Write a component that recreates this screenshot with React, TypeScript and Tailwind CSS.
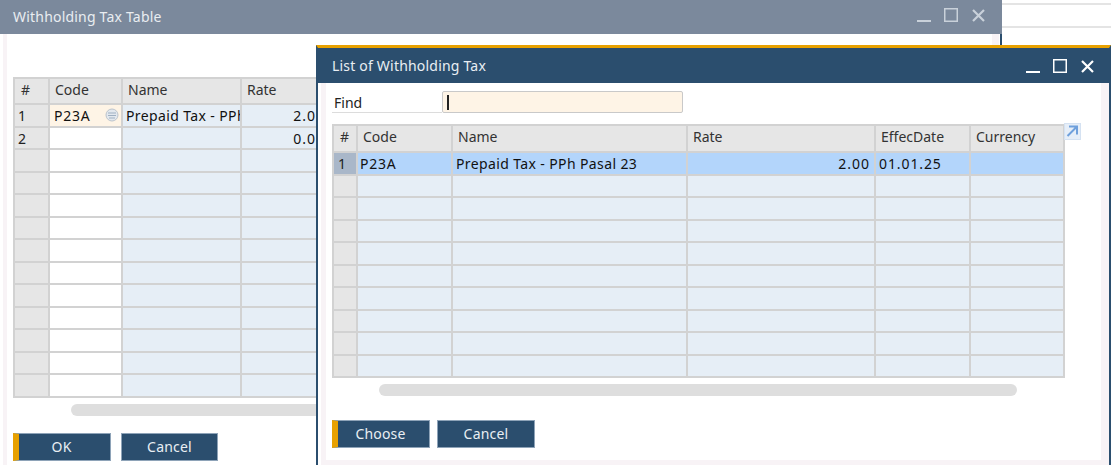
const font = "font-['Noto_Sans','Liberation_Sans',sans-serif]";

function WindowButtons({ color, className }: { color: string; className?: string }) {
  return (
    <div className={`flex items-center gap-[13px] ${className ?? ""}`} style={{ color }}>
      <svg width="14" height="14" viewBox="0 0 14 14">
        <rect x="0" y="12" width="14" height="2" fill="currentColor" />
      </svg>
      <svg width="14" height="14" viewBox="0 0 14 14">
        <rect x="0.75" y="0.75" width="12.5" height="12.5" fill="none" stroke="currentColor" strokeWidth="1.5" />
      </svg>
      <svg width="14" height="14" viewBox="0 0 14 14">
        <path d="M2 2 L13 13 M13 2 L2 13" stroke="currentColor" strokeWidth="2.2" fill="none" />
      </svg>
    </div>
  );
}

function Btn({ label, primary, width }: { label: string; primary?: boolean; width: string }) {
  return (
    <button
      className={`flex ${width} h-[28px] items-center justify-center border border-[#8ea3b8] bg-[#2b4e6e] pb-[1px] text-[14px] tracking-[0.2px] text-[#e9eef3] ${
        primary ? "border-l-[6px] border-l-[#e8a100] pr-[6px]" : ""
      }`}
    >
      {label}
    </button>
  );
}

function HeaderCell({ label }: { label: string }) {
  return (
    <div
      className={`truncate border-r-2 border-b-2 border-[#d2d2d2] bg-[#e6e6e6] text-[14px] leading-[22px] text-[#333] ${
        label === "#" ? "pl-[6px]" : "pl-[5px]"
      }`}
    >
      {label}
    </div>
  );
}

function BackTable() {
  const rows = Array.from({ length: 13 }, (_, i) => i);
  return (
    <div className="grid w-[310px] grid-cols-[35px_73px_119px_85px] grid-rows-[26px] auto-rows-[22.5px] border-t-2 border-l-2 border-[#d2d2d2]">
      <HeaderCell label="#" />
      <HeaderCell label="Code" />
      <HeaderCell label="Name" />
      <HeaderCell label="Rate" />
      {rows.map((i) => (
        <div key={i} className="contents">
          <div className="border-r-2 border-b-2 border-[#d2d2d2] bg-[#e6e6e6] pl-[3px] text-[14px] leading-[22px] text-[#222]">
            {i < 2 ? i + 1 : ""}
          </div>
          <div
            className={`relative border-r-2 border-b-2 border-[#d2d2d2] pl-[4px] text-[14px] leading-[22px] tracking-[0.75px] text-[#111] ${
              i === 0 ? "bg-[#fef4e6]" : "bg-white"
            }`}
          >
            {i === 0 && "P23A"}
            {i === 0 && (
              <svg width="14" height="14" viewBox="0 0 14 14" className="absolute top-[3px] right-[2px]">
                <circle cx="7" cy="7" r="6" fill="#e3e8ee" stroke="#bcc4cc" />
                <path d="M3 5 H11 M3 7.5 H11 M4 10 H10" stroke="#9fb0c2" strokeWidth="1" />
              </svg>
            )}
          </div>
          <div className="overflow-hidden border-r-2 border-b-2 border-[#d2d2d2] bg-[#e6eef6] pl-[3px] text-[14px] leading-[22px] tracking-[0.38px] whitespace-nowrap text-[#111]">
            {i === 0 && "Prepaid Tax - PPh Pasal 23"}
          </div>
          <div className="border-b-2 border-[#d2d2d2] bg-[#e6eef6] pr-[2px] text-right text-[14px] leading-[22px] tracking-[1px] whitespace-nowrap text-[#111]">
            {i === 0 ? "2.00" : i === 1 ? "0.00" : ""}
          </div>
        </div>
      ))}
    </div>
  );
}

function ListTable() {
  const rows = Array.from({ length: 10 }, (_, i) => i);
  const heads = ["#", "Code", "Name", "Rate", "EffecDate", "Currency"];
  return (
    <div className="grid w-[732px] grid-cols-[24px_95px_235px_188px_95px_94px] grid-rows-[27px] auto-rows-[22.5px] border-t-2 border-l-2 border-[#d2d2d2]">
      {heads.map((h) => (
        <HeaderCell key={h} label={h} />
      ))}
      {rows.map((i) => {
        const sel = i === 0;
        const cell = `border-r-2 border-b-2 border-[#d2d2d2] text-[14px] leading-[22px] text-[#111] ${
          sel ? "bg-[#b3d5fb]" : "bg-[#e6eef6]"
        }`;
        return (
          <div key={i} className="contents">
            <div
              className={`border-r-2 border-b-2 border-[#d2d2d2] pl-[4px] text-[14px] leading-[22px] text-[#222] ${
                sel ? "bg-[#a9b7c9]" : "bg-[#e6e6e6]"
              }`}
            >
              {sel ? "1" : ""}
            </div>
            <div className={`${cell} pl-[2px] tracking-[0.75px]`}>{sel && "P23A"}</div>
            <div className={`${cell} pl-[3px] tracking-[0.38px]`}>{sel && "Prepaid Tax - PPh Pasal 23"}</div>
            <div className={`${cell} pr-[4px] text-right tracking-[1px]`}>{sel && "2.00"}</div>
            <div className={`${cell} pl-[3px] tracking-[0.9px]`}>{sel && "01.01.25"}</div>
            <div className={cell} />
          </div>
        );
      })}
    </div>
  );
}

export default function App() {
  return (
    <div className={`relative h-[465px] w-[1111px] overflow-hidden bg-white ${font}`}>
      {/* page behind the dialogs */}
      <div className="absolute top-[3px] right-0 left-[1002px] h-[25px] border-y-2 border-[#e4e4e4]" />

      {/* Withholding Tax Table */}
      <div className="absolute top-0 left-0 flex h-[465px] w-[1002px] flex-col bg-white">
        <div className="flex h-[34px] shrink-0 items-center justify-between bg-[#7b899c] pr-[17px] pl-[13px]">
          <span className="pb-[1px] text-[14px] tracking-[0.2px] text-[#e9edf1]">Withholding Tax Table</span>
          <WindowButtons color="#c9d1da" className="mb-[4px]" />
        </div>
        <div className="flex-1 border-r-2 border-[#2b4e6e]">
          <div className="mr-[1px] ml-[3px] h-full border-r-[7px] border-l-4 border-[#f8f3f6] pt-[43px] pl-[6px]">
            <BackTable />
            <div className="mt-[6.5px] ml-[58px] h-[12px] w-[400px] rounded-full bg-[#dedede]" />
            <div className="mt-[17px] flex gap-[10px]">
              <Btn label="OK" primary width="w-[98px]" />
              <Btn label="Cancel" width="w-[97px]" />
            </div>
          </div>
        </div>
      </div>

      {/* List of Withholding Tax */}
      <div className="absolute top-[45px] left-[316px] flex h-[420px] w-[795px] flex-col border-t-[3px] border-r-2 border-l-2 border-[#2b4e6e] border-t-[#e8a100] bg-white">
        <div className="flex h-[35px] shrink-0 items-center justify-between bg-[#2b4e6e] pr-[15px] pl-[14px]">
          <span className="text-[14px] tracking-[0.2px] text-[#e9eef3]">List of Withholding Tax</span>
          <WindowButtons color="#ffffff" />
        </div>
        <div className="ml-[3px] flex-1 border-r-[8px] border-b-[5px] border-l-[5px] border-[#f8f3f6] pt-[8px] pl-[6px]">
          <div className="flex h-[22px] items-center">
            <div className="h-[22px] w-[110px] border-b border-[#dcdcdc] pl-[2px] text-[14px] leading-[23px] text-[#222]">Find</div>
            <div className="flex h-[22px] w-[241px] items-center rounded-[2px] border border-[#c9c9c9] bg-[#fef4e6] pl-[4px]">
              <div className="h-[15px] w-[1.5px] bg-[#222]" />
            </div>
          </div>
          <div className="relative mt-[11px] w-[732px]">
            <ListTable />
            <svg width="17" height="17" viewBox="0 0 17 17" className="absolute top-[-1px] left-[732px]">
              <rect x="0.5" y="0.5" width="16" height="16" fill="#e6eef8" stroke="#d5e2f2" />
              <path d="M5 3.5 H13 V11.5 M12.5 4 L3.5 13" fill="none" stroke="#6fa0dc" strokeWidth="2" />
            </svg>
          </div>
          <div className="mt-[6px] ml-[47px] h-[12px] w-[638px] rounded-full bg-[#dedede]" />
          <div className="mt-[24px] flex gap-[7px]">
            <Btn label="Choose" primary width="w-[98px]" />
            <Btn label="Cancel" width="w-[98px]" />
          </div>
        </div>
      </div>
    </div>
  );
}
